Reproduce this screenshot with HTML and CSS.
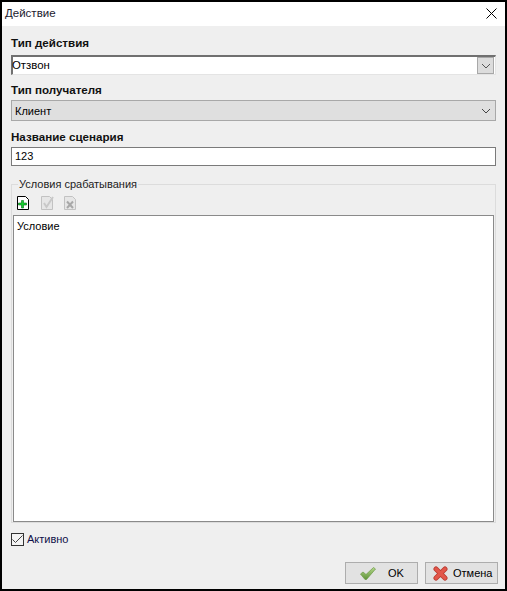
FILE: index.html
```html
<!DOCTYPE html>
<html lang="ru">
<head>
    <meta charset="UTF-8">
    <title>Действие</title>
    <link rel="stylesheet" href="styles.css">
</head>
<body>
    <div class="window">
        <div class="titlebar">
            <span class="title">Действие</span>
            <svg class="close" width="11" height="11" viewBox="0 0 11 11"><path d="M.5.5l10 10M10.500.5l-10 10" stroke="#000" fill="none"/></svg>
        </div>
        <div class="content">
            <div class="field-label first">Тип действия</div>
            <div class="combo-edit">
                <span class="combo-text">Отзвон</span>
                <span class="combo-btn"><svg width="10" height="6" viewBox="0 0 10 6"><path d="M1 1l4 4 4-4" stroke="#555" fill="none"/></svg></span>
            </div>

            <div class="field-label second">Тип получателя</div>
            <div class="combo-flat">
                <span>Клиент</span>
                <svg width="10" height="6" viewBox="0 0 10 6"><path d="M1 1l4 4 4-4" stroke="#444" fill="none"/></svg>
            </div>

            <div class="field-label third">Название сценария</div>
            <div class="text-input">123</div>

            <!-- условия -->
            <div class="group">
                <div class="group-title">Условия срабатывания</div>
                <div class="toolbar">
                    <svg class="tool-add" width="12" height="14" viewBox="0 0 12 14">
                        <path d="M.5.5h8l3 3v10H.5z" fill="#fff" stroke="#000"/>
                        <path d="M4.500 4.500h2v2.500h3v2h-3v3h-2V9h-3V7h3z" fill="#17d02f" stroke="#0a6a1c" stroke-width=".6"/>
                    </svg>
                    <svg class="tool-edit" width="13" height="14" viewBox="0 0 13 14">
                        <path d="M.5.5h8l3 3v10H.5z" fill="#e6e6e6" stroke="#c2c2c2"/>
                        <path d="M3 7l2.500 4L12 1" fill="none" stroke="#c8c8c8" stroke-width="2"/>
                    </svg>
                    <svg class="tool-del" width="12" height="14" viewBox="0 0 12 14">
                        <path d="M.5.5h8l3 3v10H.5z" fill="#e6e6e6" stroke="#c2c2c2"/>
                        <path d="M3 5.500l6 6.500M9 5.500l-6 6.500" fill="none" stroke="#a8a8a8" stroke-width="2"/>
                    </svg>
                </div>
                <div class="list">Условие</div>
            </div>

            <label class="check">
                <span class="check-box"><svg width="11" height="9" viewBox="0 0 11 9"><path d="M.5 4.500l3 3 7-7" stroke="#444" fill="none"/></svg></span>
                <span>Активно</span>
            </label>

            <div class="buttons">
                <div class="btn btn-ok">
                    <svg width="16" height="13" viewBox="0 0 16 13">
                        <defs>
                            <linearGradient id="okFill" x1="0" y1="0" x2="0" y2="1">
                                <stop offset="0" stop-color="#b4d68a"/>
                                <stop offset="1" stop-color="#5f9438"/>
                            </linearGradient>
                        </defs>
                        <path d="M.5 7L3 5l3 2.500L13.500.5 15.500 2 6.500 12.500h-1.500z" fill="url(#okFill)" stroke="#6a9a45" stroke-width=".7" stroke-linejoin="round"/>
                    </svg>
                    <span>OK</span>
                </div>
                <div class="btn btn-cancel">
                    <svg width="15" height="15" viewBox="0 0 15 15">
                        <path d="M3 3l9 9M12 3l-9 9" stroke="#b8392e" stroke-width="5" stroke-linecap="round" fill="none"/>
                        <path d="M3 3l9 9M12 3l-9 9" stroke="#e2564a" stroke-width="3.400" stroke-linecap="round" fill="none"/>
                    </svg>
                    <span>Отмена</span>
                </div>
            </div>
        </div>
    </div>
</body>
</html>
```

FILE: styles.css
```css
/* общие стили */
html, body {
    margin: 0;
    height: 100%;
}

body {
    font-family: "Liberation Sans", Arial, sans-serif;
    font-size: 11px;
    color: #000;
    background-color: #000;
}

.window {
    box-sizing: border-box;
    width: 507px;
    height: 591px;
    border: 2px solid #000;
    display: flex;
    flex-direction: column;
    background-color: #efefef;
}

/* заголовок окна */
.titlebar {
    box-sizing: border-box;
    height: 24px;
    flex: none;
    display: flex;
    align-items: center;
    justify-content: space-between;
    background-color: #fff;
    padding: 0 8px 2px 3px;
}

.title {
    font-size: 11.500px;
    color: #1a1a2e;
}

.content {
    flex: 1;
    display: flex;
    flex-direction: column;
    padding: 0 9px 5px 9px;
}

/* поля */
.field-label {
    font-size: 11.600px;
    font-weight: bold;
    line-height: 14px;
    color: #111;
}

.first {
    margin-top: 10px;
}

.second {
    margin-top: 8px;
}

.third {
    margin-top: 9px;
}

.combo-edit {
    box-sizing: border-box;
    height: 20px;
    margin-top: 5px;
    display: flex;
    align-items: center;
    justify-content: space-between;
    font-size: 11.400px;
    background-color: #fff;
    border-top: 2px solid #707070;
    border-left: 2px solid #707070;
    border-right: 1px solid #e4e4e4;
    border-bottom: 1px solid #e4e4e4;
    padding-right: 1px;
}

.combo-text {
    margin: 0 0 2px -1px;
}

.combo-btn {
    box-sizing: border-box;
    width: 17px;
    height: 17px;
    display: flex;
    align-items: center;
    justify-content: center;
    background-color: #dcdcdc;
    border: 1px solid #a8a8a8;
}

.combo-flat {
    box-sizing: border-box;
    height: 21px;
    margin-top: 3px;
    display: flex;
    align-items: center;
    justify-content: space-between;
    padding: 0 4px 0 3px;
    background-color: #dfdfdf;
    border: 1px solid #a8a8a8;
}

.text-input {
    box-sizing: border-box;
    height: 19px;
    margin-top: 3px;
    padding: 0 3px;
    line-height: 17px;
    background-color: #fff;
    border: 1px solid #7a7a7a;
}

/* группа условий */
.group {
    flex: 1;
    display: flex;
    flex-direction: column;
    position: relative;
    margin-top: 18px;
    padding: 0 1px;
    border: 1px solid #dcdcdc;
}

.group-title {
    position: absolute;
    top: -8px;
    left: 6px;
    padding: 0 1px;
    line-height: 14px;
    color: #222;
    background-color: #efefef;
}

.toolbar {
    box-sizing: border-box;
    display: flex;
    height: 30px;
    padding: 11px 0 0 4px;
}

.tool-add {
    margin-right: 12px;
}

.tool-edit {
    margin-right: 10px;
}

.list {
    flex: 1;
    padding: 4px 3px;
    background-color: #fff;
    border: 1px solid #8a8a8a;
}

/* чекбокс */
.check {
    display: flex;
    align-items: center;
    gap: 3px;
    height: 14px;
    margin-top: 9px;
    color: #10104a;
}

.check-box {
    box-sizing: border-box;
    width: 13px;
    height: 13px;
    display: flex;
    align-items: center;
    justify-content: center;
    border: 1px solid #333;
    background-color: #f4f4f4;
}

/* кнопки */
.buttons {
    display: flex;
    justify-content: flex-end;
    gap: 7px;
    margin: 16px -2px 0 0;
}

.btn {
    box-sizing: border-box;
    width: 73px;
    height: 22px;
    display: flex;
    align-items: center;
    background-color: #e2e2e2;
    border: 1px solid #adadad;
}

.btn-ok {
    gap: 12px;
    padding-left: 14px;
}

.btn-cancel {
    gap: 5px;
    padding-left: 7px;
}
```
